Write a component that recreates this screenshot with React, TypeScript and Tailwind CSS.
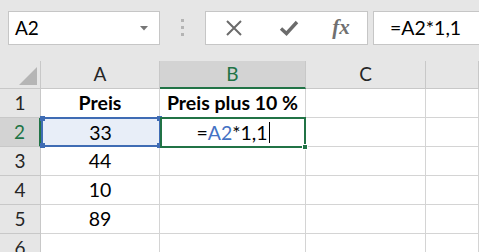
import React from "react";

const font = { fontFamily: "Lato, 'Liberation Sans', sans-serif" };

function ColHeader({ label, active }: { label: string; active?: boolean }) {
  return (
    <div
      className={
        "flex items-center justify-center border-r border-[#c8c8c8] text-[19px] " +
        (active
          ? "bg-[#d3d3d3] text-[#217346] border-b-2 border-b-[#217346]"
          : "bg-[#e6e6e6] text-[#262626] border-b border-b-[#c8c8c8]")
      }
    >
      {label}
    </div>
  );
}

function RowHeader({ label, active }: { label: string; active?: boolean }) {
  return (
    <div
      className={
        "flex items-center justify-center border-b border-[#c8c8c8] text-[19px] " +
        (active
          ? "bg-[#d3d3d3] text-[#217346] border-r-2 border-r-[#217346]"
          : "bg-[#e6e6e6] text-[#262626] border-r border-r-[#c8c8c8]")
      }
    >
      {label}
    </div>
  );
}

function Cell({ children, bold }: { children?: React.ReactNode; bold?: boolean }) {
  return (
    <div
      className={
        "flex items-center justify-center border-r border-b border-[#d4d4d4] bg-white text-[19.5px] text-black " +
        (bold ? "font-bold" : "")
      }
    >
      {children}
    </div>
  );
}

export default function App() {
  const rows: [string, React.ReactNode][] = [
    ["3", "44"],
    ["4", "10"],
    ["5", "89"],
    ["6", null],
  ];

  return (
    <div className="w-[479px] h-[252px] overflow-hidden bg-[#e6e6e6]" style={font}>
      {/* formula bar */}
      <div className="flex items-start h-[61px] pt-[11px] pl-2">
        <div className="relative flex items-center w-[152px] h-[34px] bg-white border border-[#c6c6c6] pl-[6px] text-[19px] text-black">
          A2
          <svg className="absolute right-[11px] top-[14px]" width="8" height="5" viewBox="0 0 8 5">
            <path d="M0 0h8L4 4.5z" fill="#767676" />
          </svg>
        </div>
        <div className="flex flex-col gap-[4px] w-[45px] items-center pt-[8px]">
          <span className="w-[3px] h-[3px] bg-[#b4b4b4]" />
          <span className="w-[3px] h-[3px] bg-[#b4b4b4]" />
          <span className="w-[3px] h-[3px] bg-[#b4b4b4]" />
        </div>
        <div className="flex items-center w-[163px] h-[34px] bg-white border border-[#c6c6c6]">
          <div className="flex justify-center w-[55px]">
            <svg width="18" height="18" viewBox="0 0 18 18">
              <path d="M2 2L16 16M16 2L2 16" stroke="#6b6b6b" strokeWidth="2" />
            </svg>
          </div>
          <div className="flex justify-center w-[55px]">
            <svg width="20" height="18" viewBox="0 0 20 18">
              <path d="M2 9.5L7.5 14.5L18 3" stroke="#6b6b6b" strokeWidth="3.4" fill="none" />
            </svg>
          </div>
          <div
            className="flex justify-center w-[50px] text-[21px] italic font-bold text-[#707070]"
            style={{ fontFamily: "'Liberation Serif', serif" }}
          >
            fx
          </div>
        </div>
        <div className="flex items-center flex-1 h-[34px] ml-[5px] bg-white border border-r-0 border-[#c6c6c6] pl-[16px] text-[19.5px] text-black">
          =A2*1,1
        </div>
      </div>

      {/* grid */}
      <div className="relative grid grid-cols-[41px_119px_146px_120px_1fr] grid-rows-[28px_repeat(6,29px)]">
        <div className="relative bg-[#e6e6e6] border-r border-b border-[#c8c8c8]">
          <svg className="absolute right-[3px] bottom-[3px]" width="18" height="18" viewBox="0 0 18 18">
            <path d="M18 0V18H0z" fill="#b5b5b5" />
          </svg>
        </div>
        <ColHeader label="A" />
        <ColHeader label="B" active />
        <ColHeader label="C" />
        <ColHeader label="" />

        <RowHeader label="1" />
        <Cell bold>Preis</Cell>
        <Cell bold>Preis plus 10 %</Cell>
        <Cell />
        <Cell />

        <RowHeader label="2" active />
        <div className="flex items-center justify-center bg-[#e8eef8] text-[19.5px] text-black">33</div>
        <div className="flex items-center justify-center bg-white text-[19.5px] text-black">
          =<span className="text-[#4472c4]">A2</span>*1,1
          <span className="w-[1px] h-[21px] bg-black ml-[1px]" />
        </div>
        <Cell />
        <Cell />

        {rows.map(([n, a]) => (
          <React.Fragment key={n}>
            <RowHeader label={n} />
            <Cell>{a}</Cell>
            <Cell />
            <Cell />
            <Cell />
          </React.Fragment>
        ))}

        {/* reference highlight on A2 */}
        <div className="absolute left-[41px] top-[56px] w-[120px] h-[30px] border-2 border-[#3f6cb4] pointer-events-none">
          <span className="absolute -left-[3px] -top-[3px] w-[5px] h-[5px] bg-[#3f6cb4]" />
          <span className="absolute -right-[3px] -top-[3px] w-[5px] h-[5px] bg-[#3f6cb4]" />
          <span className="absolute -left-[3px] -bottom-[3px] w-[5px] h-[5px] bg-[#3f6cb4]" />
          <span className="absolute -right-[3px] -bottom-[3px] w-[5px] h-[5px] bg-[#3f6cb4]" />
        </div>
        {/* active cell B2 */}
        <div className="absolute left-[160px] top-[56px] w-[146px] h-[31px] border-2 border-[#217346] pointer-events-none">
          <span className="absolute -right-[4px] -bottom-[4px] w-[6px] h-[6px] bg-[#217346] border border-white" />
        </div>
      </div>
    </div>
  );
}
